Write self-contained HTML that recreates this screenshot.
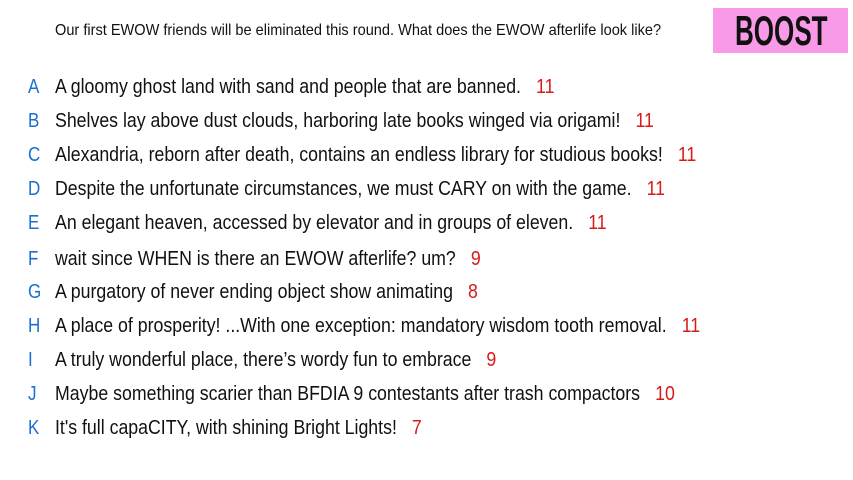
<!DOCTYPE html>
<html><head><meta charset="utf-8"><style>
html,body{margin:0;padding:0;background:#fff;width:853px;height:480px;overflow:hidden;position:relative;font-family:"Liberation Sans Narrow","Liberation Sans",sans-serif;color:#111}
.t{position:absolute;left:55px;top:22px;font-size:16px;white-space:nowrap;transform:scaleX(0.91);transform-origin:left center}
.boost{position:absolute;left:713px;top:8px;width:135px;height:45px;background:#f99ae8}
.boost span{position:absolute;left:22px;top:0px;font-size:42px;font-weight:bold;line-height:45px;transform:scaleX(0.62);transform-origin:left center;color:#111}
.r{position:absolute;left:0;height:24px;line-height:24px;font-size:20px;white-space:nowrap}
.l{position:absolute;left:28px;color:#1a6fd0;transform:scaleX(0.85);transform-origin:left center}
.x{position:absolute;left:55px;transform:scaleX(0.886);transform-origin:left center}
.n{color:#d81a1a;margin-left:17px}
</style></head><body>
<div class="t">Our first EWOW friends will be eliminated this round. What does the EWOW afterlife look like?</div>
<div class="boost"><span>BOOST</span></div>
<div class="r" style="top:75px"><span class="l">A</span><span class="x">A gloomy ghost land with sand and people that are banned.<span class="n">11</span></span></div>
<div class="r" style="top:109px"><span class="l">B</span><span class="x">Shelves lay above dust clouds, harboring late books winged via origami!<span class="n">11</span></span></div>
<div class="r" style="top:143px"><span class="l">C</span><span class="x">Alexandria, reborn after death, contains an endless library for studious books!<span class="n">11</span></span></div>
<div class="r" style="top:177px"><span class="l">D</span><span class="x">Despite the unfortunate circumstances, we must CARY on with the game.<span class="n">11</span></span></div>
<div class="r" style="top:211px"><span class="l">E</span><span class="x">An elegant heaven, accessed by elevator and in groups of eleven.<span class="n">11</span></span></div>
<div class="r" style="top:247px"><span class="l">F</span><span class="x">wait since WHEN is there an EWOW afterlife? um?<span class="n">9</span></span></div>
<div class="r" style="top:280px"><span class="l">G</span><span class="x">A purgatory of never ending object show animating<span class="n">8</span></span></div>
<div class="r" style="top:314px"><span class="l">H</span><span class="x">A place of prosperity! ...With one exception: mandatory wisdom tooth removal.<span class="n">11</span></span></div>
<div class="r" style="top:348px"><span class="l">I</span><span class="x">A truly wonderful place, there’s wordy fun to embrace<span class="n">9</span></span></div>
<div class="r" style="top:382px"><span class="l">J</span><span class="x">Maybe something scarier than BFDIA 9 contestants after trash compactors<span class="n">10</span></span></div>
<div class="r" style="top:416px"><span class="l">K</span><span class="x">It's full capaCITY, with shining Bright Lights!<span class="n">7</span></span></div>
</body></html>
